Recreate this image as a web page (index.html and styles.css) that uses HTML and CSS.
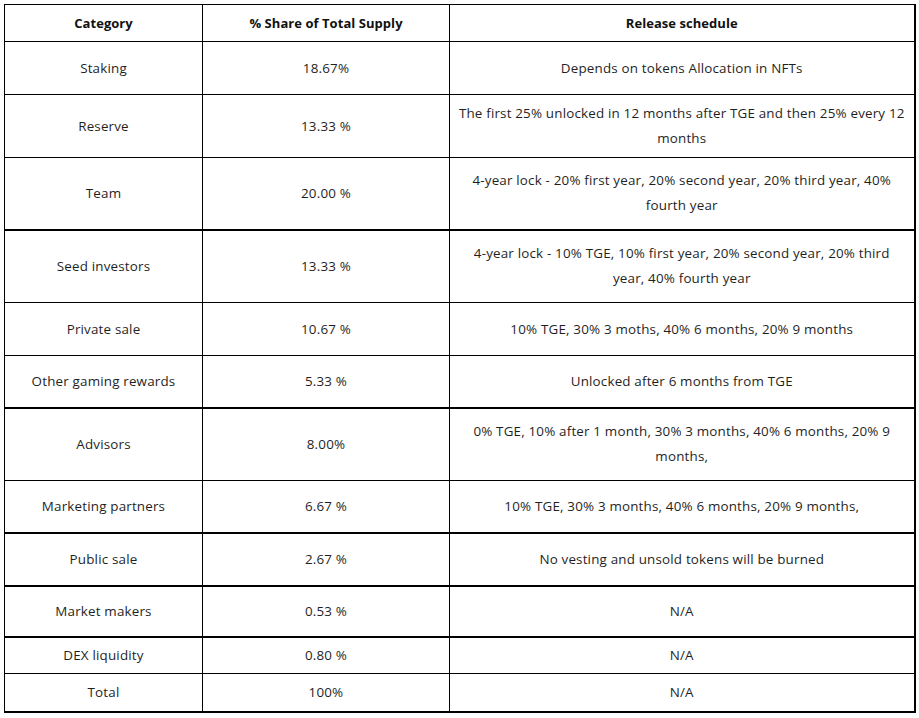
FILE: index.html
```html
<!DOCTYPE html>
<html>
<head>
<meta charset="utf-8">
<link rel="stylesheet" href="styles.css">
</head>
<body>
<table class="alloc">
  <colgroup>
    <col class="c1"><col class="c2"><col class="c3">
  </colgroup>
  <thead>
    <tr class="h37"><th>Category</th><th>% Share of Total Supply</th><th>Release schedule</th></tr>
  </thead>
  <tbody>
    <tr class="h53"><td>Staking</td><td>18.67%</td><td>Depends on tokens Allocation in NFTs</td></tr>
    <tr class="h63"><td>Reserve</td><td>13.33 %</td><td>The first 25% unlocked in 12 months after TGE and then 25% every 12<br>months</td></tr>
    <tr class="h72"><td>Team</td><td>20.00 %</td><td>4-year lock - 20% first year, 20% second year, 20% third year, 40%<br>fourth year</td></tr>
    <tr class="h73 thick"><td>Seed investors</td><td>13.33 %</td><td>4-year lock - 10% TGE, 10% first year, 20% second year, 20% third<br>year, 40% fourth year</td></tr>
    <tr class="h53"><td>Private sale</td><td>10.67 %</td><td>10% TGE, 30% 3 moths, 40% 6 months, 20% 9 months</td></tr>
    <tr class="h52"><td>Other gaming rewards</td><td>5.33 %</td><td>Unlocked after 6 months from TGE</td></tr>
    <tr class="h73 thick"><td>Advisors</td><td>8.00%</td><td>0% TGE, 10% after 1 month, 30% 3 months, 40% 6 months, 20% 9<br>months,</td></tr>
    <tr class="h52"><td>Marketing partners</td><td>6.67 %</td><td>10% TGE, 30% 3 months, 40% 6 months, 20% 9 months,</td></tr>
    <tr class="h53 thick"><td>Public sale</td><td>2.67 %</td><td>No vesting and unsold tokens will be burned</td></tr>
    <tr class="h51 thick"><td>Market makers</td><td>0.53 %</td><td>N/A</td></tr>
    <tr class="h37 thick"><td>DEX liquidity</td><td>0.80 %</td><td>N/A</td></tr>
    <tr class="h38"><td>Total</td><td>100%</td><td>N/A</td></tr>
  </tbody>
</table>
</body>
</html>
```
FILE: styles.css
```css
html, body {
  margin: 0;
  padding: 0;
  background: #ffffff;
}
body {
  padding: 4px 0 0 4px;
  font-family: "Open Sans", "Noto Sans", "Liberation Sans", sans-serif;
  font-size: 13.4px;
  letter-spacing: 0.18px;
  color: #1f1f1f;
}
.alloc {
  border-collapse: collapse;
  table-layout: fixed;
  width: 910px;
  border-right: 2px solid #000;
  border-bottom: 2px solid #000;
}
.c1 { width: 198px; }
.c2 { width: 247px; }
.c3 { width: 465px; }
.alloc th, .alloc td {
  border: 1px solid #000;
  text-align: center;
  vertical-align: middle;
  padding: 0 4px;
  line-height: 25px;
  white-space: nowrap;
}
.alloc th {
  font-weight: 700;
  font-size: 13px;
  letter-spacing: 0.05px;
  color: #111;
}
.alloc tr:last-child td { border-bottom-width: 2px; }
.alloc td:last-child, .alloc th:last-child { border-right-width: 2px; }
.thick td { border-top-width: 2px; }
.h37 { height: 37px; }
.h38 { height: 38px; }
.h51 { height: 51px; }
.h52 { height: 52px; }
.h53 { height: 53px; }
.h63 { height: 63px; }
.h72 { height: 72px; }
.h73 { height: 73px; }
```
